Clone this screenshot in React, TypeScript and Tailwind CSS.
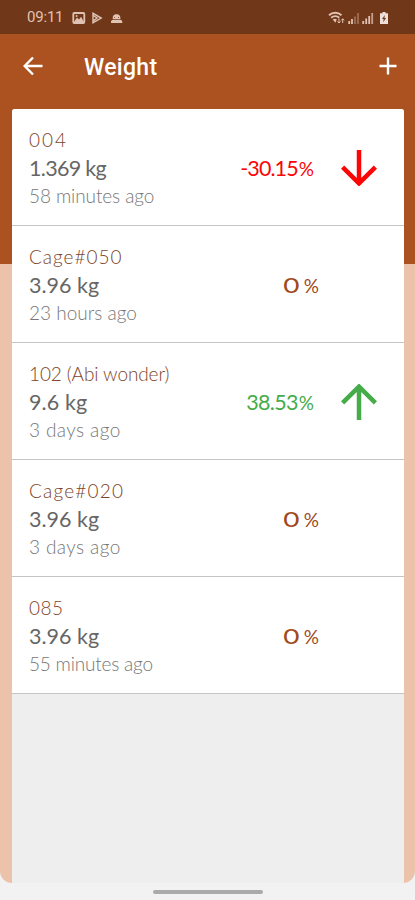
import clsx from 'clsx';
import React from 'react';

interface IWeightRecord {
  id: string;
  name: string;
  nameClass: string;
  weight: string;
  weightClass: string;
  time: string;
  timeClass: string;
  change?: string;
  trend?: 'up' | 'down';
}

const records: IWeightRecord[] = [
  {
    id: '1',
    name: '004',
    nameClass: 'tracking-[2px]',
    weight: '1.369 kg',
    weightClass: 'tracking-[-0.7px]',
    time: '58 minutes ago',
    timeClass: 'tracking-[-0.1px]',
    change: '-30.15',
    trend: 'down',
  },
  {
    id: '2',
    name: 'Cage#050',
    nameClass: 'tracking-[1px]',
    weight: '3.96 kg',
    weightClass: 'tracking-[0px]',
    time: '23 hours ago',
    timeClass: 'tracking-[0px]',
  },
  {
    id: '3',
    name: '102 (Abi wonder)',
    nameClass: 'tracking-[-0.1px]',
    weight: '9.6 kg',
    weightClass: 'tracking-[0.1px]',
    time: '3 days ago',
    timeClass: 'tracking-[0.4px]',
    change: '38.53',
    trend: 'up',
  },
  {
    id: '4',
    name: 'Cage#020',
    nameClass: 'tracking-[1.2px]',
    weight: '3.96 kg',
    weightClass: 'tracking-[0px]',
    time: '3 days ago',
    timeClass: 'tracking-[0.4px]',
  },
  {
    id: '5',
    name: '085',
    nameClass: 'tracking-[0.5px]',
    weight: '3.96 kg',
    weightClass: 'tracking-[0px]',
    time: '55 minutes ago',
    timeClass: 'tracking-[-0.2px]',
  },
];

const TrendArrow: React.FC<{ trend: 'up' | 'down' }> = ({ trend }) => (
  <svg
    viewBox="0 0 36 36"
    className={clsx('h-9 w-9', trend === 'up' ? 'rotate-180 text-[#45ac49]' : 'text-[#fb0505]')}
    fill="none"
    stroke="currentColor"
    strokeWidth="4.5"
  >
    <path d="M18 0v34M1.6 17.2 18 33.4l16.4-16.2" />
  </svg>
);

const StatusBar = () => (
  <div className="flex h-[34px] items-center bg-[#703719] pl-[27px] pr-[25px] pt-px text-[#e0c3b3]">
    <span className="w-[45px] font-[Roboto,sans-serif] text-[15px] leading-none tracking-[-0.2px]">
      09:11
    </span>
    <svg viewBox="0 0 52 14" className="h-[14px] w-[52px]" fill="none">
      <rect x="1.3" y="2" width="11" height="10" rx="1" stroke="currentColor" strokeWidth="1.8" />
      <path d="m2 11 3-4.500 2 2 2-2.700 3 5.200z" fill="currentColor" />
      <circle cx="4.6" cy="5" r="1" fill="currentColor" />
      <path d="M21 2.3v9.4l8.2-4.6zM21 4.2l4 2.8-4 3" stroke="currentColor" strokeWidth="1.4" />
      <path
        d="M39 12c-.3-2 .6-3 2-3.200C40 5 42 3.300 44.500 3.300S49 5 48.300 8.800c1.400.2 2.300 1.200 2 3.200z"
        fill="currentColor"
      />
      <path d="M39.500 8.500h10M42 6.500h1M46 6.500h1" stroke="#703719" strokeWidth=".7" />
    </svg>
    <svg viewBox="0 0 62 14" className="ml-auto h-[14px] w-[62px]" fill="none">
      <path
        d="M1 4.2C4.5 1 10 1 13.5 4.2M3.2 6.8c2.4-2 5.800-2 8 0"
        stroke="currentColor"
        strokeWidth="1.9"
      />
      <path d="m4.8 8.6 2.5 3.2 1.5-3.2c-1-1-3-1-4 0z" fill="currentColor" />
      <path
        d="M11 7.5V12m-1.500-1.500L11 12l1.500-1.500M14.700 12V7.800m-1.400 1.500 1.400-1.500 1.400 1.500"
        stroke="currentColor"
      />
      <path d="M21.2 10v3M24 8v5" stroke="currentColor" strokeWidth="1.8" />
      <path d="M27 5.5V13M30 2v11" stroke="currentColor" strokeWidth="1.8" opacity=".4" />
      <path d="M35.2 10v3M38.2 7.5V13M41.2 5v8" stroke="currentColor" strokeWidth="1.8" />
      <path d="M44.2 2v11" stroke="currentColor" strokeWidth="1.8" opacity=".75" />
      <path d="M54.5 1h3v1.300H60V13h-8V2.300h2.500z" fill="#eee0d8" />
      <path d="M56.800 4 54 8h1.600l-.4 3.300L58.200 7h-1.700z" fill="#70442c" />
    </svg>
  </div>
);

const Header = () => (
  <header className="flex h-[75px] items-start pl-[23px] pr-[18px] pt-[22px] text-white">
    <svg viewBox="0 0 20 20" className="h-5 w-5" fill="none" stroke="currentColor" strokeWidth="2.4">
      <path d="M19.5 10H2M10 1.5 1.7 10l8.3 8.5" />
    </svg>
    <h1 className="ml-[41px] mt-[-2px] font-[Roboto,sans-serif] text-[23px] font-medium leading-7 tracking-[0.3px]">
      Weight
    </h1>
    <svg
      viewBox="0 0 18 18"
      className="ml-auto mt-px h-[18px] w-[18px]"
      fill="none"
      stroke="currentColor"
      strokeWidth="2.4"
    >
      <path d="M9 .5v17M.5 9h17" />
    </svg>
  </header>
);

const WeightRow: React.FC<{ record: IWeightRecord }> = ({ record }) => {
  const { name, nameClass, weight, weightClass, time, timeClass, change, trend } = record;

  return (
    <li className="flex h-[117px] border-b-[1.5px] border-[#c5c5c5] bg-white pl-[17px] pr-[27px] pt-[17px]">
      <div className="whitespace-nowrap">
        <div className={clsx('h-7 text-[19px] font-light leading-7 text-[#7c4428]', nameClass)}>
          {name}
        </div>
        <div className={clsx('h-7 text-[21.5px] leading-7 text-[#666666]', weightClass)}>
          {weight}
        </div>
        <div className={clsx('h-7 text-[19px] font-light leading-7 text-[#777777]', timeClass)}>
          {time}
        </div>
      </div>
      {trend ? (
        <div className="ml-auto flex h-[84px] items-center">
          <span
            className={clsx(
              'mr-[27px] text-[21.5px] leading-7',
              trend === 'up'
                ? 'tracking-[-0.7px] text-[#45ac49]'
                : 'tracking-[-0.9px] text-[#fb0505]',
            )}
          >
            {change}
            <span className="ml-px text-[19px] tracking-normal">%</span>
          </span>
          <TrendArrow trend={trend} />
        </div>
      ) : (
        <div className="ml-auto mr-[58px] flex h-[84px] items-center text-[#a04a1c]">
          <span className="origin-right scale-x-130 text-[21.5px] leading-7">0</span>
          <span className="ml-[4px] mt-px text-[19px] leading-7">%</span>
        </div>
      )}
    </li>
  );
};

export default function App() {
  return (
    <div className="h-[900px] w-[415px] overflow-hidden bg-[#f2f2f2] font-[Lato,sans-serif]">
      <StatusBar />
      <div className="h-[849px] rounded-b-[12px] bg-linear-to-b from-[#ac5220] from-[230px] to-[#ecc2aa] to-[230px]">
        <Header />
        <ul className="ml-[12px] mr-[11px] h-[774px] overflow-hidden rounded-t-[3px] bg-[#eeeeee]">
          {records.map((record) => (
            <WeightRow key={record.id} record={record} />
          ))}
        </ul>
      </div>
      <div className="ml-[153px] mt-[7px] h-[4px] w-[110px] rounded-full bg-[#aaaaaa]" />
    </div>
  );
}
